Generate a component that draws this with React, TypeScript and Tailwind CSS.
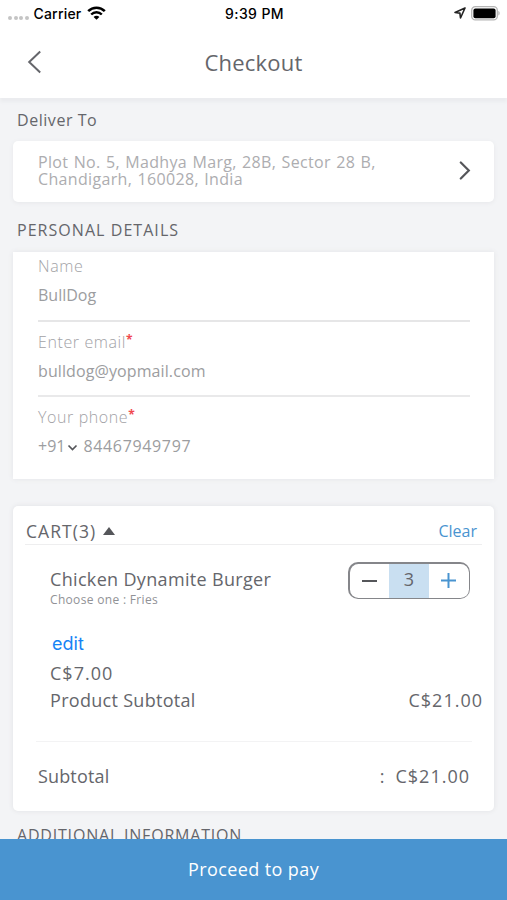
import type { ReactNode } from 'react';

const ADDRESS = ['Plot No. 5, Madhya Marg, 28B, Sector 28 B,', 'Chandigarh, 160028, India'];

export default function App() {
  return (
    <div className="flex h-[900px] w-[507px] flex-col overflow-hidden bg-[#f3f4f6] font-['Open_Sans','Noto_Sans',sans-serif] text-[#65666b]">
      <StatusBar />
      <Header />
      <main className="min-h-0 flex-1 overflow-hidden px-[13px]">
        <SectionTitle className="h-[43px] tracking-[0.55px]">Deliver To</SectionTitle>
        <AddressCard />
        <SectionTitle className="h-[50px] pt-[5px] tracking-[1.05px]">PERSONAL DETAILS</SectionTitle>
        <PersonalDetails />
        <Cart />
        <SectionTitle className="h-[48px] tracking-[0.8px]">ADDITIONAL INFORMATION</SectionTitle>
      </main>
      <button className="h-[61px] w-full shrink-0 bg-[#4994d0] text-[18px] tracking-[0.4px] text-white">
        Proceed to pay
      </button>
    </div>
  );
}

function StatusBar() {
  return (
    <div className="grid h-[26px] shrink-0 grid-cols-3 items-center bg-white pr-[6px] pl-2 font-['Inter','Liberation_Sans',sans-serif] text-[14px] font-medium text-black">
      <div className="flex items-center">
        <div className="mt-[9px] mr-[5px] flex gap-[1.5px]">
          {[0, 1, 2, 3].map((dot) => (
            <span key={dot} className="size-[4px] rounded-full bg-[#c4c4c4]" />
          ))}
        </div>
        <span className="tracking-[0.2px]">Carrier</span>
        <svg className="-mt-px ml-[6px]" width="19" height="14" viewBox="0 0 19 14" fill="none" stroke="#000">
          <path d="M1.2 5.1a11.8 11.8 0 0 1 16.6 0" strokeWidth="2.6" />
          <path d="M4.2 8.5a7.4 7.4 0 0 1 10.6 0" strokeWidth="2.4" />
          <path d="M9.5 13.8 6.6 10.9a4 4 0 0 1 5.8 0Z" fill="#000" stroke="none" />
        </svg>
      </div>
      <span className="text-center tracking-[0.4px]">9:39 PM</span>
      <div className="flex items-center justify-end gap-[5px]">
        <svg width="12" height="12" viewBox="0 0 12 12" fill="none" stroke="#222" strokeWidth="1.6" strokeLinejoin="round">
          <path d="M11 1 1 5.5l4.9.6.6 4.9Z" />
        </svg>
        <svg width="30" height="15" viewBox="0 0 30 15">
          <rect x="0.7" y="0.7" width="25.6" height="13.2" rx="3.6" fill="#fff" stroke="#b5b5b5" strokeWidth="1.3" />
          <rect x="2.4" y="2.4" width="22.2" height="9.8" rx="2" fill="#000" />
          <path d="M27.4 5v4.6c1.6-.5 1.6-4.1 0-4.6Z" fill="#aaa" />
        </svg>
      </div>
    </div>
  );
}

function Header() {
  return (
    <header className="relative grid h-[72px] shrink-0 grid-cols-[60px_1fr_60px] items-center bg-white shadow-[0_4px_3px_#ebecef]">
      <button aria-label="Back" className="pl-[27px]">
        <svg width="16" height="24" viewBox="0 0 16 24" fill="none" stroke="#65666b" strokeWidth="2">
          <path d="M13.2 1.5 2.2 12l11 10.5" />
        </svg>
      </button>
      <h1 className="pt-[1px] text-center text-[22px] tracking-[0.2px]">Checkout</h1>
    </header>
  );
}

function SectionTitle({ children, className }: { children: ReactNode; className: string }) {
  return <h2 className={`flex items-center px-1 text-[16px] whitespace-nowrap ${className}`}>{children}</h2>;
}

function AddressCard() {
  return (
    <section className="flex h-[61px] items-center justify-between rounded-[5px] bg-white pr-[23px] pb-[2px] pl-[25px] shadow-[0_1px_4px_#e6e7ea]">
      <div className="text-[16px] leading-[17px] tracking-[0.33px] whitespace-nowrap text-[#adadb0] [word-spacing:0.9px]">
        {ADDRESS.map((line) => (
          <p key={line}>{line}</p>
        ))}
      </div>
      <svg width="12" height="19" viewBox="0 0 12 19" fill="none" stroke="#55565a" strokeWidth="2.2" strokeLinecap="round">
        <path d="m1.8 1.5 8 8-8 8" />
      </svg>
    </section>
  );
}

function PersonalDetails() {
  return (
    <section className="h-[227px] bg-white pr-[24px] pl-[25px] shadow-[0_0_5px_#e3e4e7]">
      <Field label="Name" className="h-[70px] border-b-2 border-[#e6e6e7]">
        BullDog
      </Field>
      <Field label="Enter email" required className="h-[75px] border-b-2 border-[#e9e9ea] pt-[6px]">
        <span className="tracking-[0.1px]">bulldog@yopmail.com</span>
      </Field>
      <Field label="Your phone" required className="h-[82px] pt-[6px]">
        +91
        <svg className="mt-[3px] mr-[5px] ml-[2px]" width="11" height="8" viewBox="0 0 11 8" fill="none" stroke="#55565a" strokeWidth="1.7">
          <path d="m1.5 1.5 4 4 4-4" />
        </svg>
        <span className="tracking-[0.65px]">84467949797</span>
      </Field>
    </section>
  );
}

function Field({
  label,
  required,
  className,
  children,
}: {
  label: string;
  required?: boolean;
  className: string;
  children: ReactNode;
}) {
  return (
    <div className={`text-[16px] leading-[29px] text-[#9c9da0] ${className}`}>
      <p className="flex font-light tracking-[0.6px] text-[#a2a2a6]">
        {label}
        {required && <span className="-mt-px text-[12px] leading-[25px] font-bold text-[#f0494f]">*</span>}
      </p>
      <p className="flex items-center">{children}</p>
    </div>
  );
}

function Cart() {
  return (
    <section className="mt-[27px] h-[305px] rounded-[5px] bg-white text-[18px] shadow-[0_0_5px_#e0e1e4]">
      <div className="mx-[12px] flex h-[39px] items-center justify-between border-b border-[#eeeeef] pt-[12px] pr-[5px] pl-[1px]">
        <h2 className="flex items-center gap-[7px] text-[17.5px] tracking-[1.05px]">
          CART(3)
          <svg width="12" height="8" viewBox="0 0 12 8" fill="#55565a">
            <path d="M0 8 6 0l6 8Z" />
          </svg>
        </h2>
        <button className="text-[16px] text-[#4994d0]">Clear</button>
      </div>
      <div className="flex h-[70px] items-start justify-between pt-[17px] pr-[24px] pl-[37px]">
        <div className="pt-[5px]">
          <p className="leading-[24px] tracking-[0.33px]">Chicken Dynamite Burger</p>
          <p className="text-[12px] leading-[18px] tracking-[0.32px] text-[#919296]">Choose one : Fries</p>
        </div>
        <Stepper value={3} />
      </div>
      <div className="pr-[12px] pl-[37px] leading-[27px]">
        <button className="mt-[14px] block h-[31px] pb-[3px] pl-[2px] font-['Inter','Liberation_Sans',sans-serif] text-[18px] leading-[25px] text-[#1683f5]">
          edit
        </button>
        <p className="tracking-[1px]">C$7.00</p>
        <div className="flex justify-between">
          <span className="tracking-[0.3px]">Product Subtotal</span>
          <span className="-mr-px tracking-[1px]">C$21.00</span>
        </div>
      </div>
      <div className="mt-[27px] mr-[22px] ml-[23px] flex h-[68px] items-center justify-between border-t border-[#f3f3f4] pt-[2px] pr-[3px] pl-[2px]">
        <span className="tracking-[0.15px]">Subtotal</span>
        <span className="flex gap-[11px]">
          <span>:</span>
          <span className="-mr-px tracking-[1px]">C$21.00</span>
        </span>
      </div>
    </section>
  );
}

function Stepper({ value }: { value: number }) {
  return (
    <div className="grid h-[37px] w-[122px] grid-cols-3 overflow-hidden rounded-[10px] bg-[#85868a] p-[1.5px]">
      <button aria-label="Decrease" className="flex items-center justify-center rounded-l-[8.5px] bg-white">
        <span className="h-[2px] w-[15px] bg-[#55565a]" />
      </button>
      <span className="flex items-center justify-center bg-[#c9dff1] pb-[2px]">{value}</span>
      <button aria-label="Increase" className="flex items-center justify-center rounded-r-[8.5px] bg-white">
        <svg width="15" height="15" viewBox="0 0 15 15" stroke="#4994d0" strokeWidth="2">
          <path d="M7.5 0v15M0 7.5h15" />
        </svg>
      </button>
    </div>
  );
}
